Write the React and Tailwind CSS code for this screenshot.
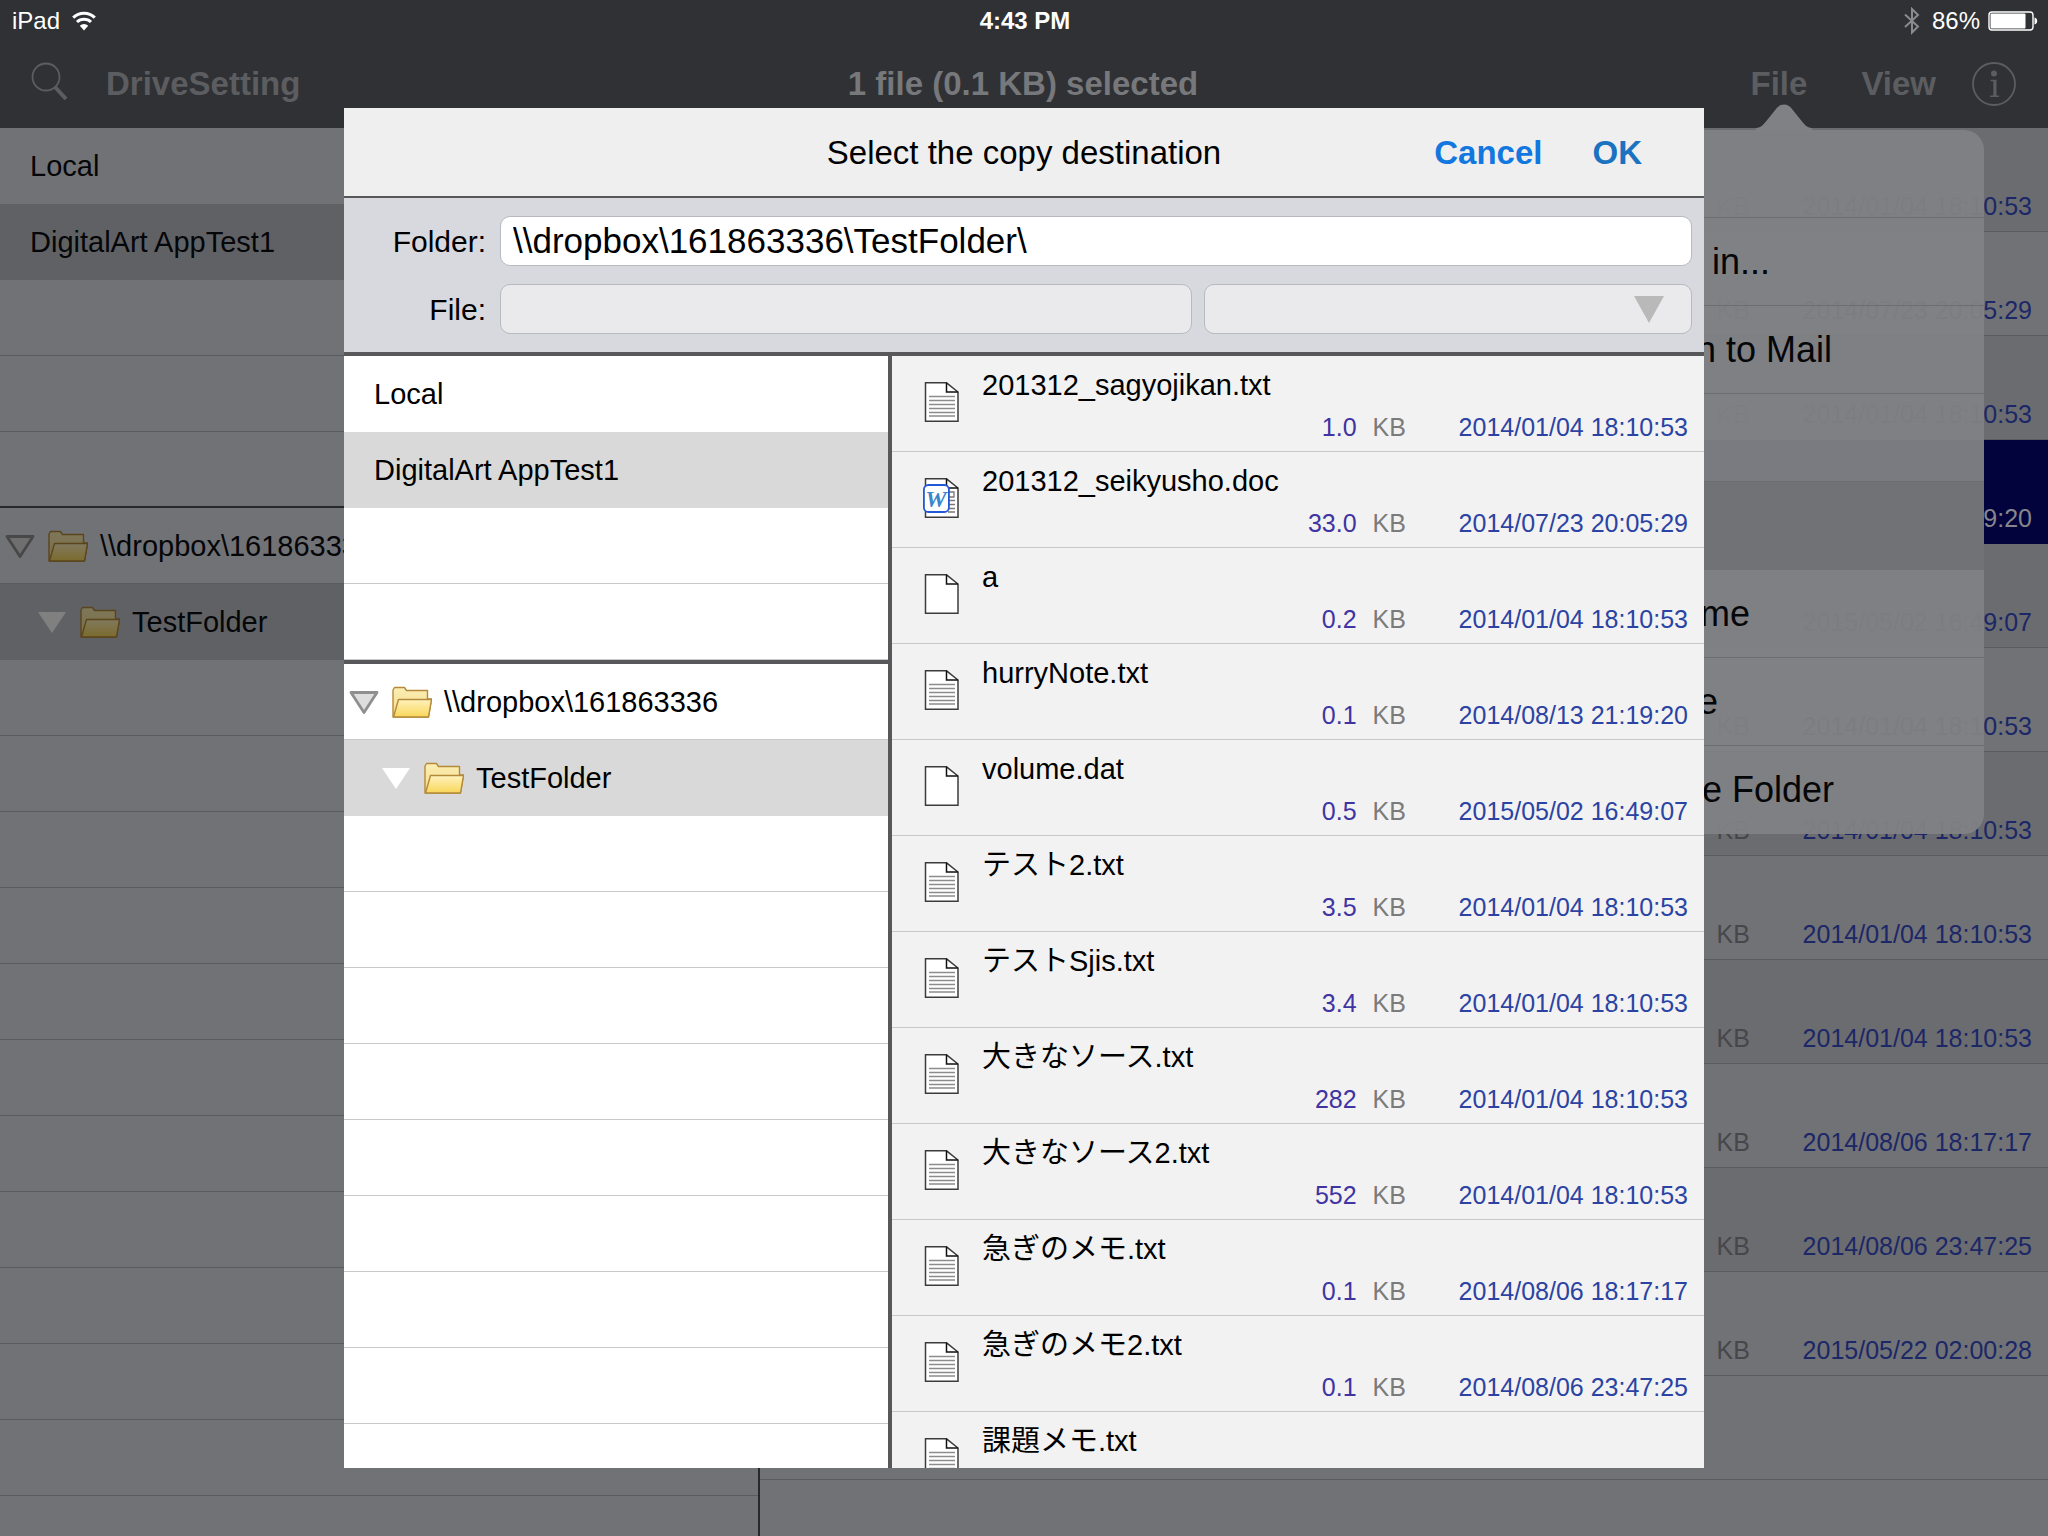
const FILES = [
  { name: "201312_sagyojikan.txt", kind: "text", size: "1.0", date: "2014/01/04 18:10:53" },
  { name: "201312_seikyusho.doc", kind: "word", size: "33.0", date: "2014/07/23 20:05:29" },
  { name: "a", kind: "blank", size: "0.2", date: "2014/01/04 18:10:53" },
  { name: "hurryNote.txt", kind: "text", size: "0.1", date: "2014/08/13 21:19:20" },
  { name: "volume.dat", kind: "blank", size: "0.5", date: "2015/05/02 16:49:07" },
  { name: "テスト2.txt", kind: "text", size: "3.5", date: "2014/01/04 18:10:53" },
  { name: "テストSjis.txt", kind: "text", size: "3.4", date: "2014/01/04 18:10:53" },
  { name: "大きなソース.txt", kind: "text", size: "282", date: "2014/01/04 18:10:53" },
  { name: "大きなソース2.txt", kind: "text", size: "552", date: "2014/01/04 18:10:53" },
  { name: "急ぎのメモ.txt", kind: "text", size: "0.1", date: "2014/08/06 18:17:17" },
  { name: "急ぎのメモ2.txt", kind: "text", size: "0.1", date: "2014/08/06 23:47:25" },
  { name: "課題メモ.txt", kind: "text", size: "0.1", date: "2015/05/22 02:00:28" },
];

const DRIVES = ["Local", "DigitalArt AppTest1"];

const MENU = ["Open", "Open in...", "Attach to Mail", "Move", "Copy", "Rename", "Delete", "Create Folder"];

const ACTIVE_DRIVE = "DigitalArt AppTest1";
const SELECTED_FILE = "hurryNote.txt";
const ACTIVE_COMMAND = "Copy";

function WifiIcon() {
  return (
    <svg className="h-6 w-6" viewBox="0 0 24 24" fill="none" stroke="white" strokeWidth="3">
      <path d="M1.2 8.6a15.4 15.4 0 0 1 21.6 0" />
      <path d="M5 13a10 10 0 0 1 14 0" />
      <path d="M12 21.5l-4.2-4.8a6 6 0 0 1 8.4 0z" fill="white" stroke="none" />
    </svg>
  );
}

function BluetoothIcon() {
  return (
    <svg className="h-7 w-4" viewBox="0 0 16 28" fill="none" stroke="#8a8b8d" strokeWidth="2">
      <path d="M1 7.5l13 12-6 6V2l6 6-13 12" />
    </svg>
  );
}

function BatteryIcon() {
  return (
    <svg className="h-5 w-[50px]" viewBox="0 0 50 20">
      <rect x="1" y="1" width="44" height="18" rx="3" fill="none" stroke="white" strokeWidth="1.4" />
      <rect x="2.5" y="2.5" width="35" height="15" rx="1" fill="white" />
      <path d="M46.500 6.500c1.800.3 2.700 1.700 2.700 3.500s-.9 3.200-2.700 3.500z" fill="white" />
    </svg>
  );
}

function SearchIcon() {
  return (
    <svg className="h-10 w-10" viewBox="0 0 40 40" fill="none" stroke="#5c5d61">
      <circle cx="16" cy="15" r="13.500" strokeWidth="1.8" />
      <path d="M25 25l11 12" strokeWidth="4" />
    </svg>
  );
}

function InfoIcon() {
  return (
    <svg className="h-11 w-11" viewBox="0 0 44 44" fill="none" stroke="#5c5d61">
      <circle cx="22" cy="22" r="21" strokeWidth="1.8" />
      <circle cx="22" cy="11.500" r="3" fill="#5c5d61" stroke="none" />
      <path d="M18.500 18.500h5v15.500M18 34.200h9" strokeWidth="1.6" />
      <path d="M22.800 18v16" strokeWidth="3" />
    </svg>
  );
}

function FolderIcon() {
  return (
    <svg className="h-9 w-10 shrink-0" viewBox="0 0 40 36">
      <defs>
        <linearGradient id="folderBack" x1="0" y1="0" x2="0" y2="1">
          <stop offset="0" stopColor="#fbeeb4" />
          <stop offset="1" stopColor="#f5dc86" />
        </linearGradient>
        <linearGradient id="folderFront" x1="0" y1="0" x2="0" y2="1">
          <stop offset="0" stopColor="#fff2bd" />
          <stop offset="1" stopColor="#f9d65a" />
        </linearGradient>
      </defs>
      <path
        d="M1 32V5L2.500 2.500H12.500L14.500 5.500H35.500V14H39.500L36.500 32Z"
        fill="url(#folderBack)"
        stroke="#b48a3a"
        strokeWidth="1.4"
        strokeLinejoin="round"
      />
      <path
        d="M1.500 32L6.500 14.500H39.500L36.500 32Z"
        fill="url(#folderFront)"
        stroke="#b48a3a"
        strokeWidth="1.4"
        strokeLinejoin="round"
      />
    </svg>
  );
}

function Disclosure({ active }) {
  return (
    <svg className="h-6 w-8 shrink-0" viewBox="0 0 32 24">
      {active ? (
        <path d="M2 1H30L16 22Z" fill="white" />
      ) : (
        <path d="M3 1.500H29L16 21.500Z" fill="#dedede" stroke="#8f8f8f" strokeWidth="2.800" strokeLinejoin="round" />
      )}
    </svg>
  );
}

function FileIcon({ kind }) {
  return (
    <svg className="h-10 w-9" viewBox="0 0 36 40">
      <path d="M2.500 .8H23.500L35 10V39.200H2.500Z" fill="white" stroke="#3c3c3c" strokeWidth="1.500" />
      <path d="M23.500 .8V10H35" fill="none" stroke="#111111" strokeWidth="1.500" />
      {kind === "text" && (
        <path
          d="M6 14.500H32M6 18.500H32M6 22.500H32M6 26.500H32M6 30.500H32M6 34H32"
          stroke="#8c8c8c"
          strokeWidth="1.300"
        />
      )}
      {kind === "word" && (
        <>
          <path d="M25 14H31V19H25M25 22.500H32M25 26.500H32M25 30.500H32M25 34H32" fill="none" stroke="#777777" strokeWidth="1.300" />
          <rect x="0.900" y="7" width="25" height="27" rx="4.500" fill="white" stroke="#2257d6" strokeWidth="1.800" />
          <text x="13" y="28.500" textAnchor="middle" fontSize="24" fontWeight="700" fontStyle="italic" fontFamily="Liberation Serif, serif" fill="#3b86cc">
            W
          </text>
        </>
      )}
    </svg>
  );
}

function TreeRows({ dim }) {
  const line = dim ? "border-[#5a5b5e]" : "border-[#c8c8c8]";
  const picked = dim ? "bg-[#606165]" : "bg-[#d9d9d9]";
  const tone = dim ? "flex items-center gap-3 brightness-50" : "flex items-center gap-3";
  return (
    <>
      <button className={`flex h-[76px] w-full items-center gap-3 border-b pt-0.5 pl-1 text-left ${line}`}>
        <span className={tone}>
          <Disclosure />
          <FolderIcon />
        </span>
        <span>{"\\\\dropbox\\161863336"}</span>
      </button>
      <button className={`flex h-[76px] w-full items-center gap-3 pt-0.5 pl-9 text-left ${picked}`}>
        <span className={tone}>
          <Disclosure active />
          <FolderIcon />
        </span>
        <span>TestFolder</span>
      </button>
      {Array.from({ length: 12 }, (_, i) => (
        <div key={i} className={`h-[76px] border-b ${line}`} />
      ))}
    </>
  );
}

function DriveRows({ dim, blanks }) {
  const line = dim ? "border-[#5a5b5e]" : "border-[#c8c8c8]";
  const lastLine = dim ? "last:border-[#27282b]" : "";
  const picked = dim ? "bg-[#606165]" : "bg-[#d9d9d9]";
  return (
    <div>
      {DRIVES.map((d) => (
        <button
          key={d}
          className={`block h-[76px] w-full pt-0.5 pl-[30px] text-left ${d === ACTIVE_DRIVE ? picked : ""}`}
        >
          {d}
        </button>
      ))}
      {Array.from({ length: blanks }, (_, i) => (
        <div key={i} className={`h-[76px] border-b ${dim ? "last:border-b-2" : ""} ${line} ${lastLine}`} />
      ))}
    </div>
  );
}

function StatusBar() {
  return (
    <div className="grid h-10 grid-cols-3 items-center pt-0.5 pr-2.5 pl-3 text-2xl text-white">
      <div className="flex items-center gap-3">
        <span>iPad</span>
        <WifiIcon />
      </div>
      <div className="text-center font-bold">4:43 PM</div>
      <div className="flex items-center justify-end gap-2">
        <BluetoothIcon />
        <span className="pl-1">86%</span>
        <BatteryIcon />
      </div>
    </div>
  );
}

function Toolbar() {
  return (
    <div className="grid h-[88px] grid-cols-3 items-center pr-8 pl-[30px] text-[33px] font-bold text-[#5c5d61]">
      <div className="flex items-center gap-9">
        <button aria-label="Search" className="mb-1">
          <SearchIcon />
        </button>
        <button>DriveSetting</button>
      </div>
      <h1 className="text-center text-[#77787b]">1 file (0.1 KB) selected</h1>
      <div className="flex items-center justify-end">
        <button className="mr-[54px]">File</button>
        <button className="mr-9">View</button>
        <button aria-label="Information">
          <InfoIcon />
        </button>
      </div>
    </div>
  );
}

function BackgroundFiles() {
  return (
    <div className="min-w-0 flex-1">
      {FILES.map((f) => {
        const on = f.name === SELECTED_FILE;
        return (
          <div
            key={f.name}
            className={`flex h-[104px] items-end justify-end border-b pr-4 pb-1.5 text-[25px] ${
              on ? "border-[#02023c] bg-[#02023c] text-[#85868c]" : "border-[#5a5b5e] text-[#1b2766] odd:bg-[#6b6c70]"
            }`}
          >
            <span>{f.size}</span>
            <span className={on ? "ml-4 w-[86px]" : "ml-4 w-[86px] text-[#46474a]"}>KB</span>
            <time>{f.date}</time>
          </div>
        );
      })}
      <div className="h-[104px] border-b border-[#5a5b5e]" />
    </div>
  );
}

function FileMenu() {
  return (
    <div className="absolute top-[104px] right-16 w-[400px]">
      <svg className="mx-auto block h-[26px] w-14" viewBox="0 0 56 26">
        <path d="M0 24C5 24 8 20 12 15L20 5C24-1 32-1 36 5L44 15C48 20 51 24 56 24V26H0Z" fill="#808184" />
      </svg>
      <div className="overflow-hidden rounded-[20px] bg-[#818285]/95 text-4xl text-[#050608]">
        {MENU.map((m) => (
          <button
            key={m}
            className={`block h-[88px] w-full border-b pl-[30px] text-left last:border-b-0 ${
              m === ACTIVE_COMMAND ? "border-[#717276] bg-[#717276]" : "border-[#6c6d70]"
            }`}
          >
            {m}
          </button>
        ))}
      </div>
    </div>
  );
}

function DestinationDialog() {
  return (
    <section
      role="dialog"
      aria-labelledby="dialogTitle"
      className="absolute top-[108px] bottom-[68px] left-1/2 flex w-[1360px] max-w-full -translate-x-1/2 flex-col overflow-hidden bg-white text-black"
    >
      <header className="grid h-[90px] shrink-0 grid-cols-[1fr_auto_1fr] items-center border-b-2 border-[#58585a] bg-[#efefef] pt-0.5 text-[33px]">
        <span />
        <h2 id="dialogTitle">Select the copy destination</h2>
        <div className="flex justify-end gap-[50px] pr-[62px] font-bold">
          <button className="text-[#1377e0]">Cancel</button>
          <button className="text-[#1a72c0]">OK</button>
        </div>
      </header>

      <form className="grid h-[158px] shrink-0 grid-cols-[142px_1fr] content-center items-center gap-x-3.5 gap-y-[18px] border-b-4 border-[#58585a] bg-[#d8d9de] pr-3 text-3xl">
        <label htmlFor="folder" className="pt-0.5 text-right">
          Folder:
        </label>
        <input
          id="folder"
          className="h-[50px] w-full rounded-[10px] border border-[#b9babf] bg-white px-3 text-[35px]"
          defaultValue={"\\\\dropbox\\161863336\\TestFolder\\"}
        />
        <label htmlFor="file" className="pt-0.5 text-right">
          File:
        </label>
        <div className="grid grid-cols-[692fr_488fr] gap-3">
          <input
            id="file"
            disabled
            className="h-[50px] w-full min-w-0 rounded-[10px] border border-[#b9babf] bg-[#eaeaec] px-3"
          />
          <div className="relative min-w-0">
            <select
              aria-label="File type"
              disabled
              className="block h-[50px] w-full appearance-none rounded-[10px] border border-[#b9babf] bg-[#eaeaec] px-3 opacity-100"
            />
            <svg className="pointer-events-none absolute top-3 right-7 h-[27px] w-[30px]" viewBox="0 0 30 27">
              <path d="M0 0H30L15 27Z" fill="#b9b9ba" />
            </svg>
          </div>
        </div>
      </form>

      <div className="flex min-h-0 flex-1 text-[29px]">
        <div className="w-2/5 overflow-hidden">
          <DriveRows blanks={2} />
          <div className="h-1 bg-[#58585a]" />
          <TreeRows />
        </div>
        <div className="w-1 bg-[#58585a]" />
        <ul className="min-w-0 flex-1 overflow-hidden bg-[#f2f2f2]">
          {FILES.map((f) => (
            <li key={f.name} className="flex h-24 border-b border-[#c8c8ca] pr-4 pl-[31px]">
              <div className="pt-[26px]">
                <FileIcon kind={f.kind} />
              </div>
              <div className="flex-1 pl-[23px]">
                <div className="h-[53px] pt-[7px] leading-[44px]">{f.name}</div>
                <div className="flex justify-end text-[25px] leading-9 text-[#2b43a3]">
                  <span className="text-[#3f34a2]">{f.size}</span>
                  <span className="ml-4 w-[86px] text-[#7b7b7b]">KB</span>
                  <time>{f.date}</time>
                </div>
              </div>
            </li>
          ))}
        </ul>
      </div>
    </section>
  );
}

export default function App() {
  return (
    <div className="relative flex h-screen flex-col overflow-hidden bg-[#717276] font-['Liberation_Sans','Noto_Sans_CJK_JP',sans-serif] text-[29px] text-[#050608]">
      <div className="shrink-0 bg-[#303134]">
        <StatusBar />
        <Toolbar />
      </div>
      <main className="flex min-h-0 flex-1">
        <div className="w-[758px] shrink-0 overflow-hidden">
          <DriveRows dim blanks={3} />
          <TreeRows dim />
        </div>
        <div className="w-0.5 bg-[#27282b]" />
        <BackgroundFiles />
      </main>
      <FileMenu />
      <DestinationDialog />
    </div>
  );
}
